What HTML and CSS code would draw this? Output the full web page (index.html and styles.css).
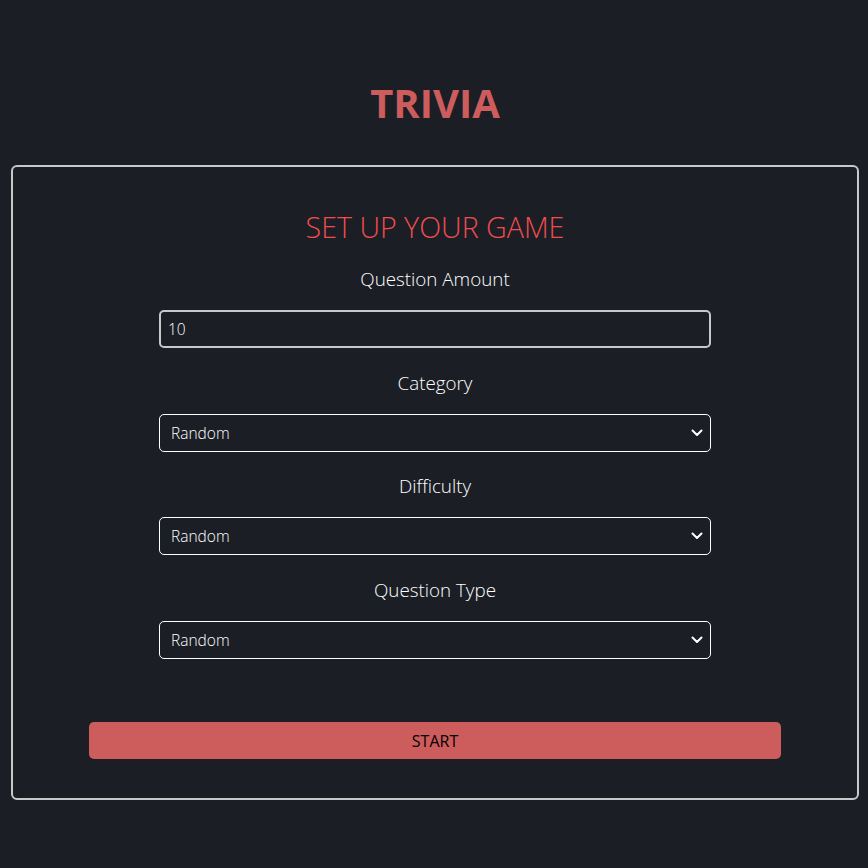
FILE: index.html
```html
<!DOCTYPE html>
<html lang="en">
<head>
<meta charset="utf-8">
<title>Trivia</title>
<link rel="stylesheet" href="styles.css">
</head>
<body>
<h1 class="title">TRIVIA</h1>
<main class="card">
  <h2 class="card-title">SET UP YOUR GAME</h2>
  <form class="form">
    <div class="field">
      <label class="label" for="amount">Question Amount</label>
      <input class="input" id="amount" type="text" value="10">
    </div>
    <div class="field">
      <label class="label" for="category">Category</label>
      <div class="select-wrap">
        <select class="select" id="category"><option>Random</option></select>
        <svg class="chevron" width="12" height="8" viewBox="0 0 12 8"><path d="M1.5 1.5 L6 6 L10.5 1.5" fill="none" stroke="#fff" stroke-width="2" stroke-linecap="round" stroke-linejoin="round"/></svg>
      </div>
    </div>
    <div class="field">
      <label class="label" for="difficulty">Difficulty</label>
      <div class="select-wrap">
        <select class="select" id="difficulty"><option>Random</option></select>
        <svg class="chevron" width="12" height="8" viewBox="0 0 12 8"><path d="M1.5 1.5 L6 6 L10.5 1.5" fill="none" stroke="#fff" stroke-width="2" stroke-linecap="round" stroke-linejoin="round"/></svg>
      </div>
    </div>
    <div class="field">
      <label class="label" for="type">Question Type</label>
      <div class="select-wrap">
        <select class="select" id="type"><option>Random</option></select>
        <svg class="chevron" width="12" height="8" viewBox="0 0 12 8"><path d="M1.5 1.5 L6 6 L10.5 1.5" fill="none" stroke="#fff" stroke-width="2" stroke-linecap="round" stroke-linejoin="round"/></svg>
      </div>
    </div>
    <button class="start" type="button">START</button>
  </form>
</main>
</body>
</html>
```

FILE: styles.css
```css
html, body {
  margin: 0;
  padding: 0;
  background: #1b1e25;
}
body {
  padding: 0 9px 0 11px;
  font-family: "Open Sans", "Noto Sans", sans-serif;
  color: #ffffff;
}
.title {
  margin: 79px 0 0;
  font-size: 40px;
  line-height: 48px;
  font-weight: 700;
  color: #cd5c5c;
  text-align: center;
}
.card {
  margin-top: 38px;
  border: 2px solid #c8c8c8;
  border-radius: 6px;
  padding: 42px 0 39px;
  display: flex;
  flex-direction: column;
  align-items: center;
}
.card-title {
  margin: 0;
  font-size: 28.6px;
  line-height: 36px;
  font-weight: 300;
  color: #f24c4c;
}
.form {
  margin-top: 22px;
  display: flex;
  flex-direction: column;
  align-items: center;
  gap: 22.5px;
  width: 100%;
}
.field {
  display: flex;
  flex-direction: column;
  align-items: center;
  gap: 19px;
  width: 552px;
}
.label {
  font-size: 18.8px;
  line-height: 24px;
  font-weight: 300;
  color: #ffffff;
}
.input {
  box-sizing: border-box;
  width: 100%;
  height: 38px;
  margin: 0;
  padding: 0 7px;
  border: 2px solid #c8c8c8;
  border-radius: 5px;
  background: #1b1e25;
  color: #ffffff;
  font-family: "Open Sans", "Noto Sans", sans-serif;
  font-size: 15.5px;
  font-weight: 300;
  outline: none;
}
.select-wrap {
  position: relative;
  width: 100%;
}
.select {
  box-sizing: border-box;
  display: block;
  width: 100%;
  height: 38px;
  margin: 0;
  padding: 0 30px 0 11px;
  border: 1px solid #ffffff;
  border-radius: 5px;
  background: #1b1e25;
  color: #ffffff;
  font-family: "Open Sans", "Noto Sans", sans-serif;
  font-size: 15.5px;
  font-weight: 300;
  -webkit-appearance: none;
  appearance: none;
  outline: none;
}
.chevron {
  position: absolute;
  right: 8px;
  top: 15px;
  pointer-events: none;
}
.start {
  margin-top: 41px;
  width: 692px;
  height: 37px;
  border: none;
  border-radius: 5px;
  background: #cd5c5c;
  color: #000000;
  font-family: "Open Sans", "Noto Sans", sans-serif;
  font-size: 16px;
  font-weight: 400;
  padding: 0;
}
```
